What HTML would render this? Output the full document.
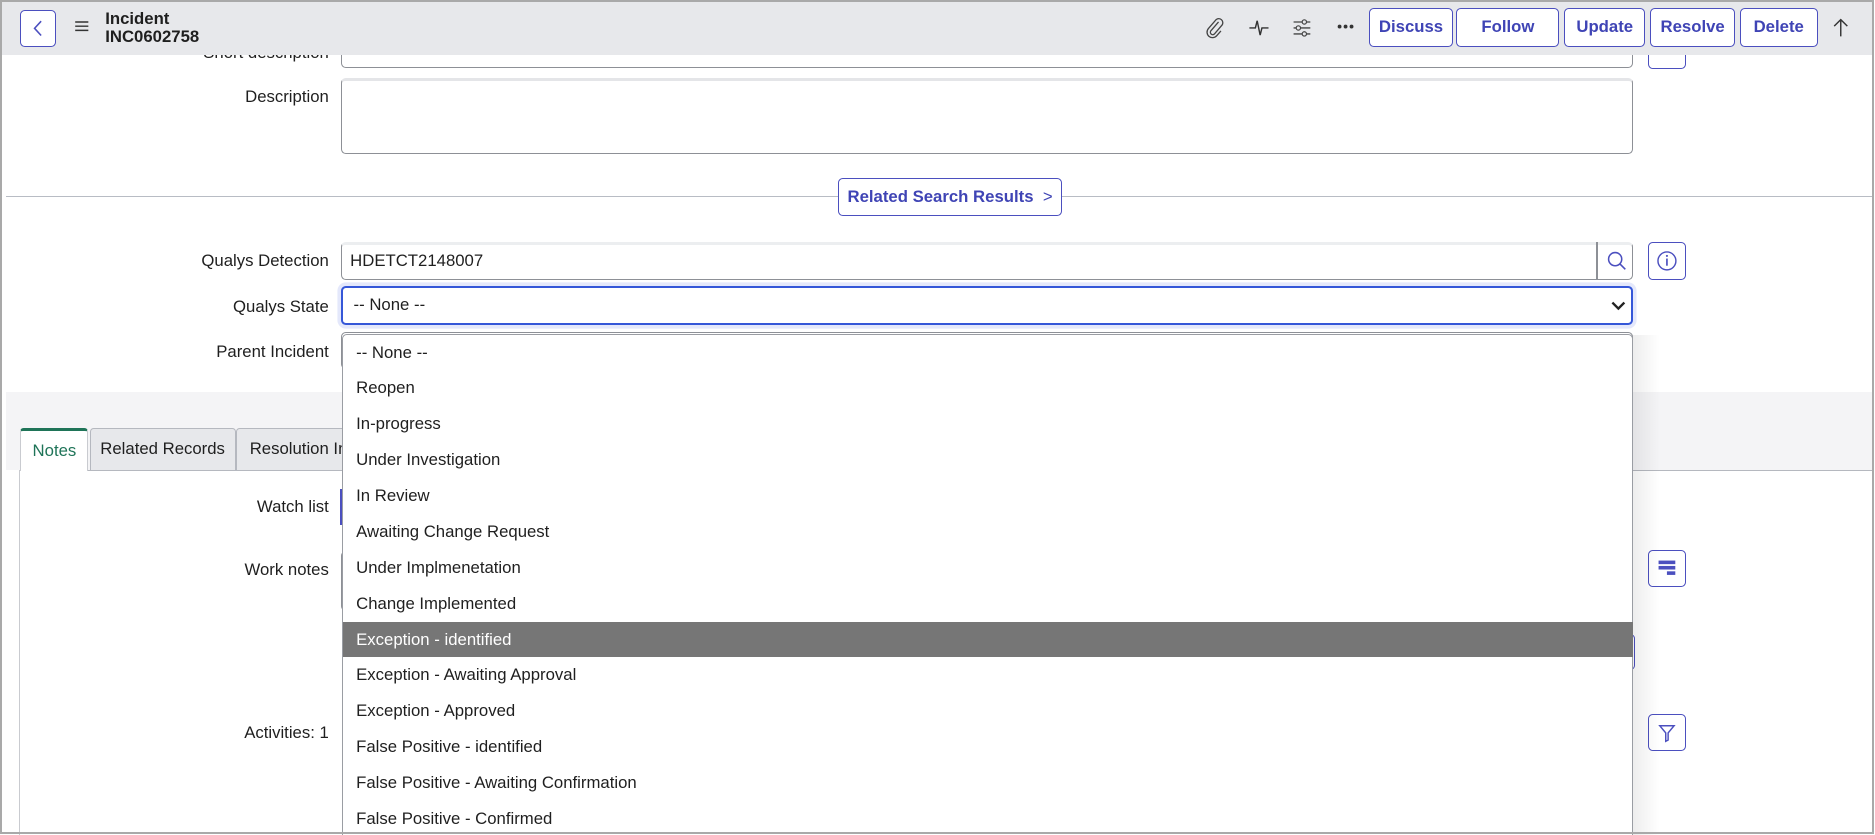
<!DOCTYPE html>
<html><head><meta charset="utf-8">
<style>
html,body{margin:0;padding:0;overflow:hidden;background:#fff}
#w{zoom:1.19579;width:1568px;height:698px;position:relative;font-family:"Liberation Sans",sans-serif;font-size:14px;color:#1f1f1f;overflow:hidden}
.a{position:absolute}
.frame{left:0;top:0;width:1564px;height:694px;border:2px solid #a9a9a9;}
.hdr{left:2px;top:2px;width:1564px;height:44px;background:#e7e8eb}
.btn{position:absolute;border:1px solid #4b4fbf;border-radius:4px;background:#fff;color:#3f44b5;font-weight:bold;font-size:14px;text-align:center;box-sizing:border-box}
.lbl{position:absolute;right:1293px;text-align:right;white-space:nowrap}
.inp{position:absolute;left:285px;width:1081px;border:1px solid #8d9096;border-radius:4px;background:#fff;box-sizing:border-box}
.opt{position:absolute;left:0;width:1079px;height:30px;line-height:30px;padding-left:11px;box-sizing:border-box}
</style></head><body><div id="w">
<div class="a" style="left:5px;top:328px;width:1561px;height:65px;background:#f4f4f6"></div>
<div class="a" style="left:5px;top:164px;width:1561px;height:1px;background:#b8bcc4"></div>

<div class="inp" style="top:30px;height:27px"></div>
<div class="btn" style="left:1378px;top:30px;width:32px;height:28px"></div>
<div class="lbl" style="top:36px">Short description</div>

<div class="lbl" style="top:73px">Description</div>
<div class="inp" style="top:65px;height:64px;border-top:3px solid #e4e5e8"></div>

<div class="btn" style="left:701px;top:149px;width:187px;height:32px;line-height:30px">Related Search Results&nbsp;&nbsp;<span style="font-weight:normal">&gt;</span></div>

<div class="lbl" style="top:210px">Qualys Detection</div>
<div class="inp" style="top:202px;height:32px;padding-left:7px;border-top:3px solid #eceef0;line-height:27px">HDETCT2148007</div>
<div class="a" style="left:1335px;top:202px;width:1px;height:32px;background:#8d9096"></div>
<svg class="a" style="left:1342px;top:208px" width="20" height="20" viewBox="0 0 20 20"><circle cx="8.5" cy="8.5" r="5.5" fill="none" stroke="#4b4fbf" stroke-width="1.3"/><path d="M12.5 12.5 17 17" stroke="#4b4fbf" stroke-width="1.3"/></svg>
<div class="btn" style="left:1378px;top:202px;width:32px;height:32px"><svg width="30" height="30" viewBox="0 0 30 30"><circle cx="15" cy="15" r="7.5" fill="none" stroke="#4b4fbf" stroke-width="1.2"/><path d="M15 13v6" stroke="#4b4fbf" stroke-width="1.4"/><circle cx="15" cy="10.8" r="0.9" fill="#4b4fbf"/></svg></div>

<div class="lbl" style="top:248px">Qualys State</div>
<div class="inp" style="top:239px;height:33px;border:2px solid #3557d8;box-shadow:0 0 0 3px #e4e8fb;line-height:29px;padding-left:9px">-- None --
<svg class="a" style="right:4px;top:9px" width="14" height="12" viewBox="0 0 14 12"><path d="M2 3l5 5 5-5" fill="none" stroke="#222" stroke-width="2"/></svg></div>

<div class="lbl" style="top:286px">Parent Incident</div>
<div class="inp" style="top:278px;height:31px"></div>

<div class="a" style="left:16px;top:393px;width:1550px;height:1px;background:#b5b8bf"></div>
<div class="a" style="left:16px;top:393px;width:1px;height:305px;background:#c9cbd0"></div>
<div class="a" style="left:17px;top:358px;width:57px;height:36px;background:#fff;border:1px solid #c9cbd0;border-top:3px solid #1f7458;border-bottom:none;box-sizing:border-box;border-radius:3px 3px 0 0;color:#1f7458;text-align:center;line-height:33px">Notes</div>
<div class="a" style="left:75px;top:358px;width:122px;height:36px;background:#e7e8eb;border:1px solid #b5b8bf;box-sizing:border-box;text-align:center;line-height:34px;border-radius:3px 3px 0 0">Related Records</div>
<div class="a" style="left:197px;top:358px;width:100px;height:36px;background:#e7e8eb;border:1px solid #b5b8bf;box-sizing:border-box;line-height:34px;padding-left:11px;white-space:nowrap;overflow:hidden;border-radius:3px 3px 0 0">Resolution Information</div>

<div class="lbl" style="top:416px">Watch list</div>
<div class="a" style="left:284px;top:409px;width:3px;height:30px;background:#4b4fbf"></div>
<div class="lbl" style="top:468px">Work notes</div>
<div class="inp" style="top:461px;height:50px"></div>
<div class="btn" style="left:1378px;top:460px;width:32px;height:31px"><svg width="30" height="29" viewBox="0 0 30 29"><rect x="8" y="8" width="14" height="3" fill="#4b4fbf"/><rect x="8" y="12.5" width="14" height="3" fill="#4b4fbf"/><rect x="15" y="17" width="7" height="3" fill="#4b4fbf"/></svg></div>
<div class="a" style="left:1360px;top:530px;width:7px;height:30px;border:1px solid #4b4fbf;border-radius:4px;box-sizing:border-box"></div>
<div class="lbl" style="top:605px">Activities: 1</div>
<div class="btn" style="left:1378px;top:597px;width:32px;height:31px"><svg width="30" height="29" viewBox="0 0 30 29"><path d="M9 9h12l-5 6v6l-2 1v-7z" fill="none" stroke="#4b4fbf" stroke-width="1.2"/></svg></div>

<div class="a" style="left:1366px;top:280px;width:22px;height:418px;background:linear-gradient(90deg,rgba(0,0,0,.07),rgba(0,0,0,0))"></div>
<div class="a" style="left:286px;top:279px;width:1080px;height:430px;background:#fff;border:1px solid #9a9da3;border-radius:4px;box-sizing:border-box">
<div class="opt" style="top:0">-- None --</div>
<div class="opt" style="top:30px">Reopen</div>
<div class="opt" style="top:60px">In-progress</div>
<div class="opt" style="top:90px">Under Investigation</div>
<div class="opt" style="top:120px">In Review</div>
<div class="opt" style="top:150px">Awaiting Change Request</div>
<div class="opt" style="top:180px">Under Implmenetation</div>
<div class="opt" style="top:210px">Change Implemented</div>
<div class="opt" style="top:240px;background:#767676;color:#fff">Exception - identified</div>
<div class="opt" style="top:270px">Exception - Awaiting Approval</div>
<div class="opt" style="top:300px">Exception - Approved</div>
<div class="opt" style="top:330px">False Positive - identified</div>
<div class="opt" style="top:360px">False Positive - Awaiting Confirmation</div>
<div class="opt" style="top:390px">False Positive - Confirmed</div>
</div>

<div class="a hdr"></div>
<div class="btn" style="left:17px;top:8px;width:30px;height:31px"><svg width="28" height="29" viewBox="0 0 28 29"><path d="M16 8.5l-5.5 6 5.5 6" fill="none" stroke="#4b4fbf" stroke-width="1.3"/></svg></div>
<svg class="a" style="left:62px;top:16px" width="13" height="12" viewBox="0 0 13 12"><path d="M1 2.5h11M1 6h11M1 9.5h11" stroke="#333" stroke-width="1.2"/></svg>
<div class="a" style="left:88px;top:8px;font-weight:600;font-size:14px;line-height:15px">Incident<br>INC0602758</div>
<svg class="a" style="left:1006px;top:13px" width="20" height="20" viewBox="0 0 20 20"><path d="M13 5l-6.5 7.5a2 2 0 0 0 3 2.6L16 7.5a3.4 3.4 0 0 0-5-4.5L4.5 10.5a4.6 4.6 0 0 0 7 6L15 12.5" fill="none" stroke="#444" stroke-width="1.1"/></svg>
<svg class="a" style="left:1043px;top:13px" width="20" height="20" viewBox="0 0 20 20"><path d="M2 10h5l1.5-6 2.5 12 1.5-6H18" fill="none" stroke="#333" stroke-width="1.2"/></svg>
<svg class="a" style="left:1079px;top:13px" width="20" height="20" viewBox="0 0 20 20"><path d="M3 5h14M3 10h14M3 15h14" stroke="#444" stroke-width="1.1"/><circle cx="12" cy="5" r="1.8" fill="#e7e8eb" stroke="#444"/><circle cx="7" cy="10" r="1.8" fill="#e7e8eb" stroke="#444"/><circle cx="12" cy="15" r="1.8" fill="#e7e8eb" stroke="#444"/></svg>
<svg class="a" style="left:1117px;top:19px" width="16" height="6" viewBox="0 0 16 6"><circle cx="3" cy="3" r="1.6" fill="#333"/><circle cx="8" cy="3" r="1.6" fill="#333"/><circle cx="13" cy="3" r="1.6" fill="#333"/></svg>
<div class="btn" style="left:1145px;top:7px;width:70px;height:32px;line-height:30px">Discuss</div>
<div class="btn" style="left:1218px;top:7px;width:86px;height:32px;line-height:30px">Follow</div>
<div class="btn" style="left:1308px;top:7px;width:68px;height:32px;line-height:30px">Update</div>
<div class="btn" style="left:1380px;top:7px;width:71px;height:32px;line-height:30px">Resolve</div>
<div class="btn" style="left:1455px;top:7px;width:65px;height:32px;line-height:30px">Delete</div>
<svg class="a" style="left:1530px;top:13px" width="18" height="20" viewBox="0 0 18 20"><path d="M9 17V3M3.5 8.5 9 3l5.5 5.5" fill="none" stroke="#333" stroke-width="1.2"/></svg>

<div class="a frame"></div>
</div></body></html>
